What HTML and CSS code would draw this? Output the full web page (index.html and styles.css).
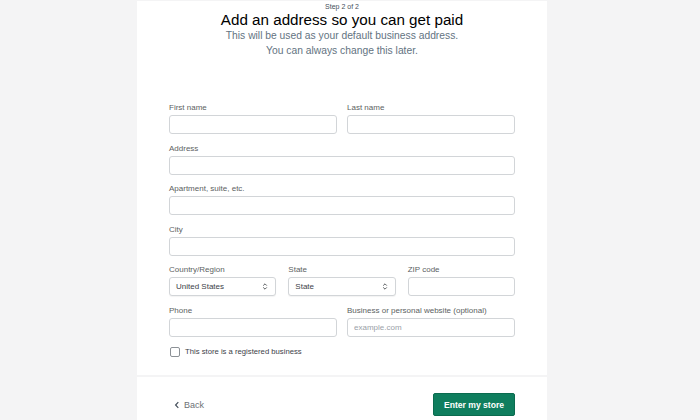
FILE: index.html
```html
<!DOCTYPE html>
<html lang="en">
<head>
    <meta charset="UTF-8">
    <meta name="viewport" content="width=device-width, initial-scale=1.0">
    <title>Add an address</title>
    <link rel="stylesheet" href="styles.css">
</head>
<body>
    <div class="shell">
        <div class="card card-main">
            <div class="step">Step 2 of 2</div>
            <h1>Add an address so you can get paid</h1>
            <p class="subtitle">This will be used as your default business address.<br>You can always change this later.</p>

            <form class="form">
                <div class="row two">
                    <div class="field">
                        <label>First name</label>
                        <input type="text">
                    </div>
                    <div class="field">
                        <label>Last name</label>
                        <input type="text">
                    </div>
                </div>
                <div class="field">
                    <label>Address</label>
                    <input type="text">
                </div>
                <div class="field">
                    <label>Apartment, suite, etc.</label>
                    <input type="text">
                </div>
                <div class="field">
                    <label>City</label>
                    <input type="text">
                </div>
                <div class="row three">
                    <div class="field">
                        <label>Country/Region</label>
                        <div class="select">
                            <span>United States</span>
                            <svg width="6" height="9" viewBox="0 0 6 9"><path d="M1.2 3.6 3 1.8 4.8 3.6M1.2 5.4 3 7.2 4.8 5.4" fill="none" stroke="#5c5f62" stroke-width="1"/></svg>
                        </div>
                    </div>
                    <div class="field">
                        <label>State</label>
                        <div class="select">
                            <span>State</span>
                            <svg width="6" height="9" viewBox="0 0 6 9"><path d="M1.2 3.6 3 1.8 4.8 3.6M1.2 5.4 3 7.2 4.8 5.4" fill="none" stroke="#5c5f62" stroke-width="1"/></svg>
                        </div>
                    </div>
                    <div class="field">
                        <label>ZIP code</label>
                        <input type="text">
                    </div>
                </div>
                <div class="row two">
                    <div class="field">
                        <label>Phone</label>
                        <input type="text">
                    </div>
                    <div class="field">
                        <label>Business or personal website (optional)</label>
                        <input type="text" placeholder="example.com">
                    </div>
                </div>
                <label class="check">
                    <span class="box"></span>
                    This store is a registered business
                </label>
            </form>
        </div>

        <div class="card card-footer">
            <a class="back" href="#">
                <svg width="6" height="8" viewBox="0 0 6 8"><path d="M4.3 1.2 1.6 4 4.3 6.8" fill="none" stroke="#454f5b" stroke-width="1.2"/></svg>
                Back
            </a>
            <button type="button" class="primary">Enter my store</button>
        </div>
    </div>
</body>
</html>
```

FILE: styles.css
```css
body {
    font-family: 'Liberation Sans', Arial, sans-serif;
    background-color: #f4f4f5;
    color: #212b36;
    margin: 0;
    padding: 1px 16px 0 0;
    overflow: hidden;
}
.shell {
    width: 410px;
    margin: 0 auto;
}
.card {
    background-color: #fff;
}
.card-main {
    padding: 2px 32px 18px;
    height: 354px;
    margin-bottom: 2px;
}
.step {
    text-align: center;
    font-size: 7px;
    color: #454f5b;
    line-height: 8px;
}
h1 {
    text-align: center;
    font-size: 15.2px;
    font-weight: normal;
    color: #000;
    margin: 0;
    line-height: 17px;
}
.subtitle {
    text-align: center;
    font-size: 10.3px;
    line-height: 15px;
    color: #637381;
    margin: 0;
}
.form {
    margin-top: 45px;
    display: flex;
    flex-direction: column;
    gap: 9.6px;
}
.row {
    display: grid;
}
.row.two {
    grid-template-columns: 1fr 1fr;
    gap: 10px;
}
.row.three {
    grid-template-columns: 1fr 1fr 1fr;
    gap: 12px;
}
.field label {
    display: block;
    font-size: 8px;
    line-height: 10px;
    color: #5c5f62;
    margin-bottom: 2px;
}
.field input,
.select {
    display: block;
    box-sizing: border-box;
    width: 100%;
    height: 19px;
    border: 1px solid #d2d5d8;
    border-radius: 3px;
    font-family: inherit;
    font-size: 8px;
    padding: 0 6px;
    margin: 0;
    background: #fff;
}
.field input::placeholder {
    color: #9aa1a8;
}
.select {
    display: flex;
    align-items: center;
    justify-content: space-between;
    color: #3c4148;
    padding-right: 7px;
    box-shadow: 0 1px 1px rgba(0, 0, 0, 0.05);
}
.check {
    display: flex;
    align-items: center;
    gap: 5px;
    font-size: 7.7px;
    color: #3c4148;
    padding-left: 1px;
}
.check .box {
    width: 8px;
    height: 8px;
    border: 1px solid #8c9196;
    border-radius: 2px;
}
.card-footer {
    height: 27px;
    padding: 16px 32px 0 37px;
    display: flex;
    justify-content: space-between;
    align-items: flex-start;
}
.back {
    display: flex;
    align-items: center;
    gap: 4px;
    color: #6d7175;
    text-decoration: none;
    font-size: 9px;
    margin-top: 7px;
}
.primary {
    width: 82px;
    height: 23px;
    background-color: #0f7e5e;
    border: 1px solid #0b6b4f;
    border-radius: 2px;
    color: #fff;
    font-family: inherit;
    font-size: 8.6px;
    font-weight: bold;
    padding: 0;
}
```
